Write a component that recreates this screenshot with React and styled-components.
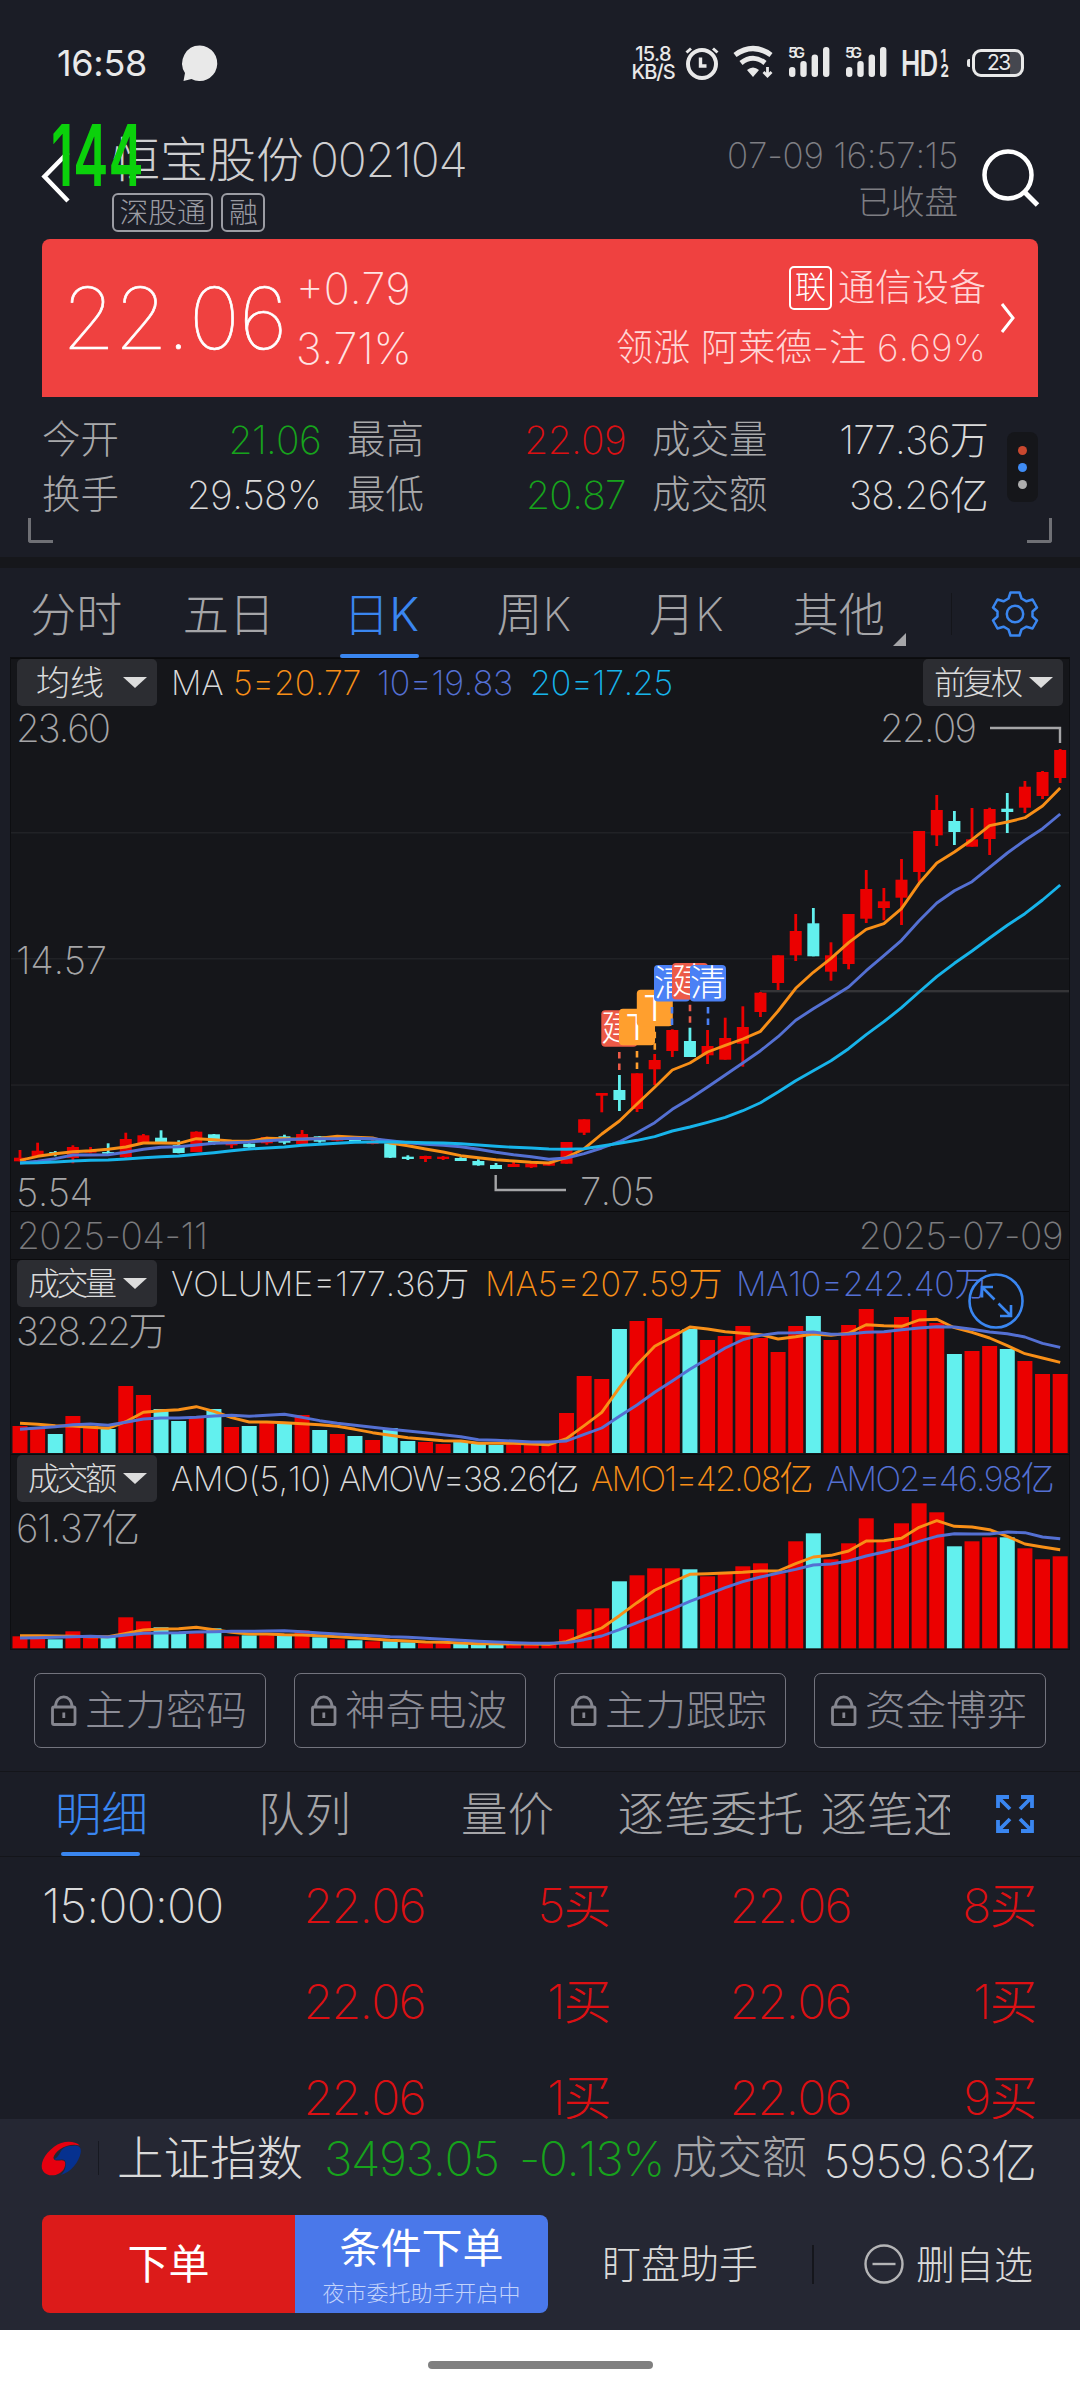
import React from 'react';
import styled, { createGlobalStyle } from 'styled-components';

const colors = {
    bg: '#1b1d26',
    panel: '#15161a',
    bar: '#252733',
    up: '#eb0000',
    down: '#62f0ee',
    red: '#dc1013',
    green: '#17a31c',
    blue: '#3a86f0',
    ma5: '#f88f17',
    ma10: '#5470d3',
    ma20: '#17b4ea',
    text: '#dadada',
    label: '#a5a5a8',
};

const STEP = 17.63;
const FIRST_X = 20;
const fallingDays = [2, 5, 8, 9, 11, 13, 15, 17, 19, 21, 22, 25, 26, 27, 34, 38, 45, 53, 56];

// high, body top, body bottom, low
const candles = [
    [1150, 1157.7, 1161.3, 1161.3], [1142.7, 1150.7, 1156.3, 1157], [1151, 1152, 1153.3, 1156.3],
    [1145.3, 1147, 1158, 1163.3], [1147, 1150, 1152.7, 1153.3], [1143.3, 1152, 1153.7, 1154.3],
    [1132.7, 1139, 1157.3, 1158.3], [1134, 1135.3, 1143.3, 1144], [1130.3, 1137.7, 1143.3, 1144],
    [1140.3, 1145, 1153, 1153.3], [1131.3, 1131.7, 1152, 1152], [1134, 1134.3, 1142.7, 1144.7],
    [1143.3, 1143.7, 1145.3, 1148], [1143.3, 1143.7, 1147.3, 1147.7], [1136.7, 1137, 1143.3, 1144.7],
    [1134.7, 1136.3, 1142.7, 1144.3], [1130, 1134, 1144, 1144.3], [1136, 1136.3, 1141.7, 1142.7],
    [1136.7, 1138, 1140.7, 1141.3], [1138.3, 1139, 1142, 1142.3], [1138.3, 1142.3, 1144, 1144.3],
    [1142.7, 1143.3, 1157.7, 1158], [1155.3, 1156.7, 1159, 1160], [1155.7, 1156, 1159, 1162],
    [1156, 1156.7, 1159, 1160], [1157.3, 1158, 1161, 1161], [1159.3, 1161, 1165.3, 1165.7],
    [1163, 1165, 1169, 1169], [1162, 1164, 1167, 1167], [1162.3, 1163.7, 1167.3, 1168],
    [1161.7, 1163, 1165.7, 1165.7], [1142, 1142, 1163.7, 1163.7], [1119.3, 1119.3, 1132.7, 1135],
    [1093, 1093, 1095.7, 1112.3], [1075, 1090, 1100, 1111], [1073.3, 1073.3, 1109, 1112],
    [1054, 1060, 1069.3, 1085], [1029.3, 1030, 1051, 1057], [1027.7, 1041, 1057, 1057],
    [1030, 1046, 1055.3, 1064], [1017.7, 1038, 1059.7, 1059.7], [1006.3, 1027, 1043.7, 1066.7],
    [992, 992.7, 1012, 1017], [955.3, 955.3, 983, 990], [914, 931, 955.3, 961],
    [908, 923.3, 956.3, 956.3], [942.3, 955.3, 971.7, 980.7], [914, 914, 964, 969.3],
    [870, 889, 918.7, 923], [888, 901.3, 908, 920.3], [859, 879.7, 897.7, 925],
    [831, 831, 872, 881.7], [795, 810, 835.3, 846], [811, 821, 832, 845],
    [808, 839.3, 846.7, 846.7], [807.7, 809, 839, 855], [793, 808.7, 812, 833],
    [781, 786.7, 807.7, 813], [771, 772, 796, 799], [749, 750, 778, 783],
];

const priceLines = {
    ma20: [
        1163, 1162.7, 1162, 1161, 1160.3, 1160, 1159, 1157.7, 1156.7, 1156, 1154.3, 1152.7, 1150.7, 1149, 1148,
        1147, 1145.3, 1144.3, 1143.3, 1142.3, 1142, 1142, 1142.3, 1142.7, 1143, 1143.7, 1145, 1146.3, 1147.3, 1148,
        1149, 1149.3, 1148.7, 1146, 1143.3, 1140.3, 1136.7, 1131, 1127, 1122.3, 1117.3, 1110.7, 1102.7, 1092, 1080.7,
        1070.7, 1060.7, 1048.7, 1034.7, 1021.7, 1007.7, 992, 976.7, 963.3, 951, 938, 925.3, 913.7, 900, 885,
    ],
    ma10: [
        1163, 1161.3, 1158.7, 1155, 1155, 1154.7, 1152.3, 1149.3, 1147.3, 1146.7, 1145, 1143.3, 1142.7, 1142, 1140.7,
        1139.7, 1139, 1138.7, 1138.7, 1138.3, 1138.7, 1140.7, 1142.7, 1144.3, 1145.3, 1146.7, 1149.3, 1152.3, 1154.7, 1156.7,
        1159.3, 1158, 1153.7, 1148, 1141.7, 1132.7, 1122.7, 1109.3, 1098.7, 1087, 1075, 1063, 1050.7, 1036.7, 1020.3,
        1008.7, 998, 987, 970.7, 955.7, 940.3, 920.7, 903, 890.7, 881.7, 867.3, 853, 840.3, 828.7, 814,
    ],
    ma5: [
        1160.3, 1156.3, 1153.7, 1151.7, 1150.7, 1149.3, 1147, 1143, 1143, 1143.3, 1138.7, 1139.7, 1141, 1141.3, 1138.3,
        1138.7, 1139.3, 1138.3, 1136.3, 1137.3, 1138, 1143, 1145.7, 1149, 1152, 1155.7, 1157.7, 1159.7, 1161, 1162.3,
        1163, 1157.3, 1148.7, 1134, 1121, 1104, 1087.3, 1070, 1063, 1052, 1045.3, 1039, 1031.3, 1011, 988.3,
        972.3, 958.3, 942.7, 929.3, 923.7, 908.7, 883.3, 863, 852, 839.7, 825.7, 822, 817.7, 806, 788,
    ],
};

const volume = {
    base: 1453,
    bars: [
        27, 26, 19, 37, 27, 24, 67, 58, 44, 32, 35, 44, 26, 27, 30, 29, 38, 23, 19, 17,
        13, 25, 12, 11, 9, 12, 9, 8, 9, 9, 9, 40, 77, 74, 124, 132, 135, 124, 124, 113,
        117, 127, 115, 101, 127, 137, 113, 128, 144, 121, 136, 143, 130, 99, 102, 107, 104, 92, 79, 79,
    ],
    ma5: [
        1423.3, 1424.3, 1425.7, 1426, 1427.3, 1428.3, 1421.7, 1412.3, 1410.7, 1409.7, 1406.7, 1411.3, 1417.7, 1422, 1422,
        1422.7, 1423.7, 1424.7, 1426.3, 1429.3, 1432.7, 1435.3, 1437.7, 1439.3, 1440.7, 1441, 1443.3, 1443.3, 1443.3, 1444,
        1444.7, 1438.7, 1425.7, 1412.3, 1387.7, 1364.7, 1346.3, 1336.7, 1327, 1329, 1331.7, 1333.3, 1334.7, 1339, 1336.7,
        1334, 1335.3, 1333.3, 1324.7, 1325.7, 1326.3, 1320, 1319.3, 1327.7, 1332.3, 1338, 1345.7, 1353.7, 1358, 1362.3,
    ],
    ma10: [
        1429.3, 1428, 1426.7, 1424.7, 1424, 1425.3, 1422.3, 1419, 1418, 1418, 1417.3, 1416, 1415.3, 1416.3, 1415.3,
        1414.3, 1417.3, 1420.7, 1423.3, 1425.3, 1427.3, 1429.3, 1431, 1432.7, 1434.7, 1436.7, 1439.7, 1440.3, 1441, 1442,
        1442, 1441, 1434.3, 1428, 1416.3, 1405, 1392.3, 1381, 1369.3, 1358.7, 1348, 1339.7, 1335.3, 1333, 1332.7,
        1332, 1334.3, 1334, 1332.3, 1331.7, 1329.7, 1328, 1326.7, 1327, 1329.3, 1332, 1333.7, 1337, 1343.3, 1347.3,
    ],
};

const amount = {
    base: 1648.3,
    bars: [
        12, 10, 9, 17, 11, 11, 31, 27, 21, 15, 15, 20, 12, 13, 13, 13, 18, 11, 9, 8,
        7, 7, 6, 5, 5, 6, 5, 5, 4, 4, 4, 19, 39, 40, 67, 73, 80, 80, 79, 72,
        75, 82, 85, 75, 107, 115, 89, 105, 130, 107, 125, 145, 136, 102, 107, 111, 111, 100, 89, 92,
    ],
    ma5: [
        1635.7, 1635.7, 1636, 1636.3, 1636.7, 1636.7, 1633.3, 1630, 1629, 1628.7, 1627.3, 1629.7, 1632.3, 1634, 1634,
        1634.7, 1635, 1635.7, 1636.7, 1637.7, 1639, 1640.3, 1641, 1642, 1642.3, 1643, 1643.7, 1643.7, 1644, 1644,
        1644.3, 1641.7, 1634.7, 1628, 1615.7, 1602.7, 1590.3, 1582, 1574.3, 1573.7, 1573, 1572.3, 1571, 1571, 1563.7,
        1557, 1555.3, 1551, 1541, 1540.7, 1538.3, 1527.3, 1520.7, 1526.3, 1527, 1529.7, 1536.3, 1544, 1547, 1549.7,
    ],
    ma10: [
        1638, 1637.7, 1637.3, 1636.7, 1636.3, 1637, 1635, 1633.3, 1633, 1632.7, 1632, 1631.7, 1631.3, 1631.3, 1631,
        1630.7, 1631.7, 1633, 1634, 1635, 1635.7, 1636.7, 1637.3, 1638.3, 1639.3, 1640.3, 1641.3, 1642, 1642.7, 1643.3,
        1643.3, 1642.7, 1639.7, 1636, 1629.7, 1622.7, 1615.7, 1609, 1601.3, 1594.7, 1587.7, 1581.7, 1577, 1573, 1569.3,
        1565, 1564, 1561, 1556, 1552, 1547.3, 1541.3, 1536.3, 1533.7, 1534, 1534, 1532, 1532.7, 1537, 1538.7,
    ],
};

const marks = [
    { x: 601.3, y: 1010.3, label: '建', color: '#ec5a48', lead: 1052 },
    { x: 619, y: 1008.7, label: 'T', color: '#ff9f2e', lead: 1051 },
    { x: 636.8, y: 989.7, label: 'T', color: '#ff9f2e', lead: 1031.7 },
    { x: 654, y: 965, label: '清', color: '#4a80f5', lead: 1007 },
    { x: 672, y: 963, label: '建', color: '#ec5a48', lead: 1004.7 },
    { x: 690, y: 965, label: '清', color: '#4a80f5', lead: 1007 },
];

const stats = [
    ['今开', '21.06', colors.green], ['最高', '22.09', colors.red], ['成交量', '177.36万', colors.text],
    ['换手', '29.58%', colors.text], ['最低', '20.87', colors.green], ['成交额', '38.26亿', colors.text],
];

const periods = ['分时', '五日', '日K', '周K', '月K', '其他'];
const signals = ['主力密码', '神奇电波', '主力跟踪', '资金博弈'];
const detailTabs = ['明细', '队列', '量价', '逐笔委托', '逐笔还原'];
const ticks = [
    ['15:00:00', '22.06', '5买', '22.06', '8买'],
    ['', '22.06', '1买', '22.06', '1买'],
    ['', '22.06', '1买', '22.06', '9买'],
];

const xOf = i => FIRST_X + i * STEP;
const dayColor = i => (fallingDays.includes(i) ? colors.down : colors.up);

const Line = ({ values, color }) => (
    <polyline
        points={values.map((y, i) => `${xOf(i).toFixed(1)},${y}`).join(' ')}
        fill="none"
        stroke={color}
        strokeWidth="2.9"
        strokeLinejoin="round"
    />
);

const PriceChart = () => (
    <Plot height="504" viewBox="11 707 1058 504">
        {[832.7, 958.7, 1085].map(y => (
            <rect key={y} x="11" y={y - 0.7} width="1058" height="1.5" fill="#212226" />
        ))}
        <rect x="760" y="990" width="309" height="2.4" fill="#343437" />
        {candles.map(([high, top, bottom, low], i) => (
            <g key={xOf(i)} fill={dayColor(i)}>
                <rect x={xOf(i) - 1.4} y={high} width="2.8" height={low - high} />
                <rect x={xOf(i) - 6} y={top} width="12" height={bottom - top} />
            </g>
        ))}
        <Line values={priceLines.ma5} color={colors.ma5} />
        <Line values={priceLines.ma10} color={colors.ma10} />
        <Line values={priceLines.ma20} color={colors.ma20} />
        {marks.map(({ x, y, label, color, lead }) => (
            <g key={x}>
                <path d={`M${x + 18} ${lead}v18`} stroke={color} strokeWidth="2.6" strokeDasharray="6.5 5" />
                <rect x={x} y={y} width="36" height="36.5" rx="4" fill={color} />
                <MarkLabel x={x + 18} y={y + 31}>{label}</MarkLabel>
            </g>
        ))}
        <path d="M990 728H1060V743M495.7 1175V1190H566" fill="none" stroke="#a5a5a7" strokeWidth="2.4" />
        <AxisLabel x="16" y="741.5" textLength="95">23.60</AxisLabel>
        <AxisLabel x="16" y="974" textLength="91">14.57</AxisLabel>
        <AxisLabel x="16" y="1205.5" textLength="77">5.54</AxisLabel>
        <AxisLabel x="880" y="742" textLength="97">22.09</AxisLabel>
        <AxisLabel x="580" y="1205" textLength="75">7.05</AxisLabel>
    </Plot>
);

const BarChart = ({ top, data, scale, scaleY, scaleWidth }) => (
    <Plot height="146" viewBox={`11 ${top} 1058 146`}>
        {data.bars.map((h, i) => (
            <rect key={xOf(i)} x={xOf(i) - 7.5} y={data.base - h} width="15" height={h} fill={dayColor(i)} />
        ))}
        <Line values={data.ma5} color={colors.ma5} />
        <Line values={data.ma10} color={colors.ma10} />
        <AxisLabel x="16" y={scaleY} textLength={scaleWidth}>{scale}</AxisLabel>
    </Plot>
);

const SignalBars = () => (
    <svg width="42" height="32" viewBox="0 0 42 32" fill="#e9e9e9">
        <SmallSvgText x="0" y="11" textLength="17">5G</SmallSvgText>
        <rect x="1" y="20" width="6.4" height="10" rx="3" />
        <rect x="12.3" y="14" width="6.4" height="16" rx="3" />
        <rect x="23.6" y="7.5" width="6.4" height="22.5" rx="3" />
        <rect x="35" y="0" width="6.4" height="30" rx="3" />
    </svg>
);

const StatusIcons = () => (
    <StatusRight>
        <NetSpeed>
            <span>15.8</span>
            <span>KB/S</span>
        </NetSpeed>
        <svg width="34" height="34" viewBox="0 0 34 34" fill="none" stroke="#e9e9e9">
            <circle cx="17" cy="18" r="14" strokeWidth="4" />
            <path d="M15.5 11.5V20h6" strokeWidth="3.4" />
            <path d="M1.5 6.5 6 2.5M32.5 6.5 28 2.5" strokeWidth="3" />
        </svg>
        <WifiIcon width="41" height="34" viewBox="0 0 41 34" fill="none" stroke="#e9e9e9">
            <path d="M2 9Q20 -4 38 9" strokeWidth="5.2" />
            <path d="M8 17Q20 7.5 32 17" strokeWidth="5" />
            <path d="M14 24Q20 19 26 24L20 31Z" fill="#e9e9e9" stroke="none" />
            <path d="M34.5 21V30M30.5 26 34.5 30 38.5 26" strokeWidth="2.8" />
        </WifiIcon>
        <SignalBars />
        <SignalBars />
        <HdMark>
            HD
            <HdIndex>
                <span>1</span>
                <span>2</span>
            </HdIndex>
        </HdMark>
        <Battery>
            <BatteryCap />
            <BatteryBody>23</BatteryBody>
        </Battery>
    </StatusRight>
);

const LockIcon = () => (
    <svg width="26" height="31" viewBox="0 0 26 31" fill="none" stroke="#85868f" strokeWidth="2.8">
        <rect x="1.5" y="12" width="22.5" height="17.5" rx="1.5" fill="#17181d" />
        <path d="M4.5 12C4.5 -1.5 21 -1.5 21 12M12.8 17.5V23" />
    </svg>
);

const GearIcon = () => (
    <svg width="46" height="46" viewBox="0 0 46 46" fill="none" stroke={colors.blue} strokeWidth="2.5" strokeLinejoin="round">
        <path d="M18.5 1.5H27.5L29.5 7.5 34.5 10.3 40.5 8.5 45 16.5 40.5 20.5V25.5L45 29.5 40.5 37.5 34.5 35.7 29.5 38.5 27.5 44.5H18.5L16.5 38.5 11.5 35.7 5.5 37.5 1 29.5 5.5 25.5V20.5L1 16.5 5.5 8.5 11.5 10.3 16.5 7.5Z" />
        <circle cx="23" cy="23" r="8.2" />
    </svg>
);

const ExpandIcon = () => (
    <svg width="38" height="38" viewBox="0 0 38 38" fill="none" stroke={colors.blue} strokeWidth="3.8">
        <path d="M2 13V2H13M2 2 14 14M25 2H36V13M36 2 24 14M2 25V36H13M2 36 14 24M25 36H36V25M36 36 24 24" />
    </svg>
);

const App = () => (
    <Screen>
        <GlobalStyle />
        <StatusBar>
            <Clock>16:58</Clock>
            <svg width="36" height="37" viewBox="0 0 36 37" fill="#e9e9e9">
                <path d="M18 .5A17.5 17.8 0 1 1 9.5 34L1.5 36 3 28A17.5 17.8 0 0 1 18 .5Z" />
            </svg>
            <StatusIcons />
        </StatusBar>

        <Header>
            <BackIcon width="30" height="54" viewBox="0 0 30 54" fill="none" stroke="#fff" strokeWidth="4.5">
                <path d="M27 2.5 3.5 26.5 27 51" />
            </BackIcon>
            <FrameCounter>144</FrameCounter>
            <TitleBlock>
                <Title>
                    恒宝股份
                    <Code>002104</Code>
                </Title>
                <Tags>
                    <Tag>深股通</Tag>
                    <Tag>融</Tag>
                </Tags>
            </TitleBlock>
            <TimeBlock>
                <Timestamp>07-09 16:57:15</Timestamp>
                <span>已收盘</span>
            </TimeBlock>
            <SearchIcon width="58" height="60" viewBox="0 0 58 60" fill="none" stroke="#fff" strokeWidth="4.5">
                <circle cx="26" cy="26" r="23.5" />
                <path d="M42.5 43 55.5 56" strokeWidth="5" />
            </SearchIcon>
        </Header>

        <QuoteCard>
            <Price>22.06</Price>
            <Change>
                <span>+0.79</span>
                <span>3.71%</span>
            </Change>
            <Sector>
                <SectorName>
                    <LinkBadge>联</LinkBadge>
                    通信设备
                </SectorName>
                <SectorLeader>领涨 阿莱德-注 6.69%</SectorLeader>
            </Sector>
            <svg width="16" height="32" viewBox="0 0 16 32" fill="none" stroke="#fff" strokeWidth="3">
                <path d="M2 2 13 16 2 30" />
            </svg>
        </QuoteCard>

        <StatsPanel>
            <StatsRow>
                <StatsGrid>
                    {stats.map(([label, value, color]) => (
                        <Stat key={label}>
                            {label}
                            <StatValue color={color}>{value}</StatValue>
                        </Stat>
                    ))}
                </StatsGrid>
                <MoreDots>
                    <Dot color="#c9482f" />
                    <Dot color="#3f8cf5" />
                    <Dot color="#adadad" />
                </MoreDots>
            </StatsRow>
            <Corners>
                <Corner side="left" />
                <Corner side="right" />
            </Corners>
        </StatsPanel>

        <PeriodTabs>
            {periods.map(name => (
                <PeriodTab key={name} active={name === '日K'}>
                    {name}
                    {name === '其他' && <MoreTriangle />}
                </PeriodTab>
            ))}
            <GearSlot>
                <GearIcon />
            </GearSlot>
        </PeriodTabs>

        <ChartPanel>
            <Legend>
                <Picker>
                    <PickerText>均线</PickerText>
                    <Caret />
                </Picker>
                <LegendItem color={colors.text} width="50">MA</LegendItem>
                <LegendItem color={colors.ma5} gap="12" width="127">5=20.77</LegendItem>
                <LegendItem color={colors.ma10} gap="17" width="138">10=19.83</LegendItem>
                <LegendItem color={colors.ma20} gap="15">20=17.25</LegendItem>
                <AdjustPicker>
                    <PickerText narrow>前复权</PickerText>
                    <Caret />
                </AdjustPicker>
            </Legend>
            <PriceChart />
            <DateRow>
                <span>2025-04-11</span>
                <span>2025-07-09</span>
            </DateRow>
            <Legend>
                <Picker>
                    <PickerText narrow>成交量</PickerText>
                    <Caret />
                </Picker>
                <LegendItem color={colors.text} width="297" spacing="0">VOLUME=177.36万</LegendItem>
                <LegendItem color={colors.ma5} gap="17" width="234" spacing="0">MA5=207.59万</LegendItem>
                <LegendItem color={colors.ma10} gap="17">MA10=242.40万</LegendItem>
                <ZoomToggle width="56" height="56" viewBox="0 0 56 56" fill="none" stroke={colors.blue} strokeWidth="2.6">
                    <circle cx="28" cy="28" r="26.5" />
                    <path d="M14 24.5V14H25M14 14 26.5 26.5M43 32V43H32M43 43 30.5 30.5" />
                </ZoomToggle>
            </Legend>
            <BarChart top={1308} data={volume} scale="328.22万" scaleY={1345} scaleWidth={151} />
            <Legend>
                <Picker>
                    <PickerText narrow>成交额</PickerText>
                    <Caret />
                </Picker>
                <LegendItem color={colors.text} width="153">AMO(5,10)</LegendItem>
                <LegendItem color={colors.text} gap="15" width="237" spacing="-1.7">AMOW=38.26亿</LegendItem>
                <LegendItem color={colors.ma5} gap="15" width="220" spacing="-1.7">AMO1=42.08亿</LegendItem>
                <LegendItem color={colors.ma10} gap="15" spacing="-1.7">AMO2=46.98亿</LegendItem>
            </Legend>
            <BarChart top={1503} data={amount} scale="61.37亿" scaleY={1542} scaleWidth={124} />
        </ChartPanel>

        <SignalRow>
            {signals.map(name => (
                <SignalButton key={name}>
                    <LockIcon />
                    {name}
                </SignalButton>
            ))}
        </SignalRow>

        <DetailBar>
            <DetailScroller>
                {detailTabs.map((name, i) => (
                    <DetailTab key={name} active={i === 0}>{name}</DetailTab>
                ))}
            </DetailScroller>
            <ExpandSlot>
                <ExpandIcon />
            </ExpandSlot>
        </DetailBar>

        <TickList>
            {ticks.map(([time, ...cells]) => (
                <TickRow key={cells.join()}>
                    <TickTime>{time}</TickTime>
                    {cells.map((cell, i) => <TickCell key={`${i}-${cell}`}>{cell}</TickCell>)}
                </TickRow>
            ))}
        </TickList>

        <BottomBar>
            <IndexRow>
                <svg width="39" height="35" viewBox="24 49 116 104">
                    <path d="M136 62C122 48 85 46 60 66C30 88 16 120 27 138C40 158 78 155 90 130C96 116 94 106 82 106C70 108 58 108 58 98C62 78 100 52 136 62Z" fill="#e6000f" />
                    <path d="M112 64C130 58 143 66 139 85C134 110 112 142 80 150C94 140 98 118 92 107C85 100 70 108 60 103C76 98 76 78 90 69C98 65 105 64 112 64Z" fill="#06318f" />
                </svg>
                <IndexDivider />
                <IndexName>上证指数</IndexName>
                <IndexValue>3493.05</IndexValue>
                <IndexChange>-0.13%</IndexChange>
                <IndexLabel>成交额</IndexLabel>
                <IndexTurnover>5959.63亿</IndexTurnover>
            </IndexRow>
            <ActionRow>
                <OrderButton>下单</OrderButton>
                <ConditionButton>
                    条件下单
                    <ConditionNote>夜市委托助手开启中</ConditionNote>
                </ConditionButton>
                <Assistant>盯盘助手</Assistant>
                <RemoveButton>
                    <svg width="40" height="40" viewBox="0 0 40 40" fill="none" stroke="#b4b4b6" strokeWidth="2.4">
                        <circle cx="20" cy="20" r="18.5" />
                        <path d="M8.5 20H31.5" />
                    </svg>
                    删自选
                </RemoveButton>
            </ActionRow>
        </BottomBar>

        <GestureArea>
            <GesturePill />
        </GestureArea>
    </Screen>
);

export default App;

const GlobalStyle = createGlobalStyle`
    * {
        box-sizing: border-box;
    }

    body {
        margin: 0;
        background: ${colors.bg};
        font-family: Inter, "Noto Sans CJK SC", sans-serif;
        font-weight: 200;
        font-kerning: none;
        white-space: nowrap;
    }

    svg {
        display: block;
        flex-shrink: 0;
        overflow: visible;
    }
`;

const Screen = styled.div`
    width: 1080px;
    height: 2400px;
    overflow: hidden;
    background: ${colors.bg};
`;

const StatusBar = styled.div`
    display: flex;
    align-items: center;
    height: 110px;
    padding: 16px 56px 0 57px;
    color: #e9e9e9;
`;

const Clock = styled.div`
    width: 125px;
    font-size: 36px;
    font-weight: 400;
    letter-spacing: -0.3px;
`;

const StatusRight = styled.div`
    display: flex;
    align-items: center;
    margin-left: auto;
    height: 34px;
`;

const NetSpeed = styled.div`
    display: flex;
    flex-direction: column;
    align-items: center;
    width: 42px;
    margin-right: 11px;
    font-size: 20px;
    font-weight: 500;
    line-height: 18px;
    letter-spacing: -1px;
`;

const WifiIcon = styled.svg`
    margin: 0 14px 0 14px;

    & + svg {
        margin-right: 15px;
    }
`;

const SmallSvgText = styled.text`
    font-size: 15px;
    font-weight: 600;
`;

const HdMark = styled.div`
    display: flex;
    align-items: center;
    width: 48px;
    margin-left: 14px;
    font-size: 35px;
    font-weight: 600;
    line-height: 34px;
    letter-spacing: -1px;
    transform: scaleX(0.74);
    transform-origin: left;
`;

const HdIndex = styled.div`
    display: flex;
    flex-direction: column;
    margin-left: 4px;
    font-size: 18px;
    font-weight: 700;
    line-height: 15px;
`;

const Battery = styled.div`
    display: flex;
    align-items: center;
    margin-left: 18px;
`;

const BatteryCap = styled.div`
    width: 3px;
    height: 8px;
    margin-right: 2px;
    border-radius: 2px 0 0 2px;
    background: #e9e9e9;
`;

const BatteryBody = styled.div`
    width: 52px;
    height: 28px;
    padding-left: 12px;
    border: 3px solid #e9e9e9;
    border-radius: 9px;
    background: linear-gradient(90deg, transparent 75%, #45474f 75%);
    font-size: 21px;
    font-weight: 400;
    line-height: 22px;
    letter-spacing: -1.5px;
`;

const Header = styled.div`
    position: relative;
    display: flex;
    align-items: flex-start;
    height: 129px;
    padding: 20px 40px 0 41px;
`;

const BackIcon = styled.svg`
    margin-top: 20px;
`;

// frame rate overlay drawn over the title
const FrameCounter = styled.div`
    position: absolute;
    top: 15px;
    left: 51px;
    color: #0bd10b;
    font-size: 85px;
    font-weight: 600;
    line-height: 62px;
    transform: scaleX(0.62);
    transform-origin: left;
`;

const TitleBlock = styled.div`
    margin-left: 41px;
`;

const Title = styled.div`
    color: #cfcfd1;
    font-size: 48px;
    line-height: 60px;
`;

const Code = styled.span`
    margin-left: 6px;
    letter-spacing: -1.3px;
`;

const Tags = styled.div`
    display: flex;
    gap: 8px;
    margin-top: 3px;
`;

const Tag = styled.div`
    height: 39px;
    padding: 0 5.5px;
    border: 2px solid #9b9ca3;
    border-radius: 6px;
    color: #9b9ca3;
    font-size: 28.8px;
    line-height: 36px;
`;

const TimeBlock = styled.div`
    display: flex;
    flex-direction: column;
    align-items: flex-end;
    margin: 2px 24px 0 auto;
    color: #7e7e83;
    font-size: 33.5px;
    line-height: 47px;
`;

const Timestamp = styled.span`
    font-size: 35px;
    letter-spacing: -0.2px;
`;

const SearchIcon = styled.svg`
    margin-top: 19px;
`;

const QuoteCard = styled.div`
    display: flex;
    align-items: center;
    height: 158px;
    margin: 0 42px;
    padding: 0 22px 0 20px;
    border-radius: 8px 8px 0 0;
    background: #ef4140;
    color: #fff;
`;

const Price = styled.div`
    width: 234px;
    font-size: 86px;
    font-weight: 100;
    letter-spacing: -1px;
    -webkit-text-stroke: 0.7px #fff;
`;

const Change = styled.div`
    display: flex;
    flex-direction: column;
    font-size: 43px;
    line-height: 60px;
    color: #ffe4e4;
`;

const Sector = styled.div`
    display: flex;
    flex-direction: column;
    align-items: flex-end;
    margin: 0 14px 0 auto;
    color: #ffd6d6;
    font-size: 37px;
    line-height: 60px;
`;

const SectorName = styled.div`
    display: flex;
    align-items: center;
    height: 60px;
`;

const LinkBadge = styled.div`
    width: 43px;
    height: 44px;
    margin-right: 6px;
    border: 2.5px solid #fff;
    border-radius: 5px;
    color: #fff;
    font-size: 31px;
    line-height: 38px;
    text-align: center;
`;

const SectorLeader = styled.div`
    font-size: 37px;
    letter-spacing: 0.2px;
`;

const StatsPanel = styled.div`
    height: 171px;
    padding-top: 15px;
    border-bottom: 11px solid #16171b;
`;

const StatsRow = styled.div`
    display: flex;
    align-items: center;
    justify-content: space-between;
    padding: 0 42px;
`;

const StatsGrid = styled.div`
    display: grid;
    grid-template-columns: 279px 279px 336px;
    column-gap: 26px;
`;

const Stat = styled.div`
    display: flex;
    justify-content: space-between;
    color: #a9a9ab;
    font-size: 38.5px;
    line-height: 55px;
`;

const StatValue = styled.span`
    color: ${props => props.color};
    font-size: 39px;
    letter-spacing: -0.7px;
`;

const MoreDots = styled.div`
    display: flex;
    flex-direction: column;
    align-items: center;
    justify-content: center;
    gap: 8px;
    width: 31px;
    height: 70px;
    border-radius: 8px;
    background: #15161a;
`;

const Dot = styled.div`
    width: 9px;
    height: 9px;
    border-radius: 50%;
    background: ${props => props.color};
`;

const Corners = styled.div`
    display: flex;
    justify-content: space-between;
    margin-top: -4px;
    padding: 0 28px;
`;

const Corner = styled.div`
    width: 25px;
    height: 25px;
    border-bottom: 3px solid #6f7075;
    border-${props => props.side}: 3px solid #6f7075;
    border-bottom-${props => props.side}-radius: 3px;
`;

const PeriodTabs = styled.div`
    display: flex;
    height: 90px;
`;

const PeriodTab = styled.div`
    position: relative;
    width: 152.5px;
    height: 90px;
    color: ${props => (props.active ? colors.blue : colors.label)};
    font-size: 46px;
    font-weight: ${props => (props.active ? 300 : 200)};
    line-height: 92px;
    text-align: center;

    &::after {
        content: '';
        display: ${props => (props.active ? 'block' : 'none')};
        position: absolute;
        bottom: 0;
        left: 35px;
        width: 79px;
        height: 4px;
        border-radius: 2px;
        background: ${colors.blue};
    }
`;

const MoreTriangle = styled.div`
    position: absolute;
    right: 9px;
    bottom: 12px;
    border-bottom: 13px solid ${colors.label};
    border-left: 13px solid transparent;
`;

const GearSlot = styled.div`
    display: flex;
    align-items: center;
    height: 42px;
    margin: 25px 0 0 36px;
    padding-left: 40px;
    border-left: 1px solid #14151a;
`;

const ChartPanel = styled.div`
    margin: 0 11px;
    background: ${colors.panel};
    box-shadow: 0 0 0 1px #0d0e11;
`;

const Plot = styled.svg`
    width: 1058px;
    height: ${props => props.height}px;
`;

const AxisLabel = styled.text`
    fill: #a5a5a7;
    font-size: 38.5px;
`;

const MarkLabel = styled.text`
    fill: #fff;
    font-size: 36px;
    font-weight: 300;
    text-anchor: middle;
`;

const Legend = styled.div`
    position: relative;
    display: flex;
    align-items: flex-start;
    height: 49px;
    padding: 0 6px;
    border-top: 1px solid #0b0b0d;
`;

const Picker = styled.div`
    display: flex;
    flex-shrink: 0;
    align-items: center;
    justify-content: space-between;
    width: 140px;
    height: 47px;
    margin-right: 14px;
    padding: 0 10px 0 11px;
    border-radius: 5px;
    background: #2c2d32;
    color: ${colors.text};
    font-weight: 300;
`;

const PickerText = styled.span`
    width: 86px;
    margin-right: auto;
    font-size: ${props => (props.narrow ? 32 : 34)}px;
    letter-spacing: ${props => (props.narrow ? -3.5 : 0)}px;
    text-indent: ${props => (props.narrow ? 0 : 8)}px;
    line-height: 46px;
`;

const AdjustPicker = styled(Picker)`
    margin: 0 0 0 auto;
`;

const Caret = styled.div`
    border-top: 11px solid #dcdcdc;
    border-left: 12px solid transparent;
    border-right: 12px solid transparent;
`;

const LegendItem = styled.div`
    flex-shrink: 0;
    width: ${props => (props.width ? `${props.width}px` : 'auto')};
    margin-left: ${props => props.gap || 0}px;
    color: ${props => props.color};
    font-size: 34px;
    line-height: 47px;
    letter-spacing: ${props => props.spacing || -0.3}px;
`;

const DateRow = styled.div`
    display: flex;
    justify-content: space-between;
    height: 48px;
    padding: 0 6px;
    border-top: 1px solid #0b0b0d;
    color: #7a7a7d;
    font-size: 37px;
    line-height: 47px;
    letter-spacing: -0.5px;
`;

const ZoomToggle = styled.svg`
    position: absolute;
    top: 13px;
    left: 957px;
`;

const SignalRow = styled.div`
    display: flex;
    gap: 28px;
    height: 122px;
    padding: 24px 34px 0;
`;

const SignalButton = styled.div`
    display: flex;
    align-items: center;
    gap: 8px;
    width: 232px;
    height: 75px;
    padding-left: 16px;
    border: 1.5px solid #73747e;
    border-radius: 7px;
    color: #8b8c96;
    font-size: 40.5px;
    line-height: 70px;
`;

const DetailBar = styled.div`
    display: flex;
    height: 86px;
    border-top: 1px solid #14151a;
    border-bottom: 1px solid #14151a;
`;

const DetailScroller = styled.div`
    display: flex;
    width: 950px;
    overflow: hidden;
`;

const DetailTab = styled.div`
    position: relative;
    flex: 0 0 203px;
    color: ${props => (props.active ? colors.blue : colors.label)};
    font-size: 46.5px;
    font-weight: ${props => (props.active ? 300 : 200)};
    line-height: 84px;
    text-align: center;

    &::after {
        content: '';
        display: ${props => (props.active ? 'block' : 'none')};
        position: absolute;
        bottom: 0;
        left: 61px;
        width: 79px;
        height: 4px;
        border-radius: 2px;
        background: ${colors.blue};
    }
`;

const ExpandSlot = styled.div`
    display: flex;
    align-items: center;
    padding-left: 46px;
`;

const TickList = styled.div`
    height: 262px;
    overflow: hidden;
`;

const TickRow = styled.div`
    display: grid;
    grid-template-columns: 200px 182px 185px 241px 185px;
    height: 96px;
    padding-left: 43px;
    font-size: 48px;
    line-height: 97px;
    letter-spacing: -1.6px;
`;

const TickTime = styled.div`
    color: ${colors.text};
    text-indent: -1px;
    letter-spacing: -0.9px;
`;

const TickCell = styled.div`
    color: ${colors.red};
    text-align: right;
`;

const BottomBar = styled.div`
    height: 211px;
    background: ${colors.bar};
`;

const IndexRow = styled.div`
    display: flex;
    align-items: center;
    height: 78px;
    padding: 0 44px 0 42px;
    font-size: 48px;
`;

const IndexDivider = styled.div`
    width: 1px;
    height: 34px;
    margin: 0 18px 0 17px;
    background: #171921;
`;

const IndexName = styled.div`
    width: 207px;
    color: ${colors.text};
    font-size: 46.5px;
    line-height: 74px;
`;

const IndexValue = styled.div`
    width: 195px;
    color: ${colors.green};
    letter-spacing: -1.4px;
`;

const IndexChange = styled(IndexValue)`
    width: 153px;
`;

const IndexLabel = styled.div`
    color: ${colors.label};
    font-size: 45px;
    line-height: 74px;
`;

const IndexTurnover = styled.div`
    margin-left: auto;
    color: ${colors.text};
    font-size: 46px;
    letter-spacing: -0.9px;
`;

const ActionRow = styled.div`
    display: flex;
    align-items: center;
    height: 98px;
    margin-top: 18px;
    padding-left: 42px;
    color: ${colors.text};
    font-size: 39px;
    font-weight: 300;
`;

const OrderButton = styled.div`
    width: 253px;
    height: 98px;
    border-radius: 8px 0 0 8px;
    background: #dc1b1a;
    color: #fff;
    font-size: 41px;
    font-weight: 400;
    line-height: 98px;
    text-align: center;
`;

const ConditionButton = styled(OrderButton)`
    display: flex;
    flex-direction: column;
    align-items: center;
    padding-top: 10px;
    border-radius: 0 8px 8px 0;
    background: #4a78ea;
    line-height: 46px;
`;

const ConditionNote = styled.span`
    color: #c3d3fb;
    font-size: 22px;
    font-weight: 200;
    line-height: 44px;
`;

const Assistant = styled.div`
    width: 212px;
    height: 39px;
    margin-left: 54px;
    border-right: 2px solid #15161c;
    line-height: 37px;
`;

const RemoveButton = styled.div`
    display: flex;
    align-items: center;
    gap: 12px;
    margin-left: 50px;
    line-height: 37px;
`;

const GestureArea = styled.div`
    display: flex;
    justify-content: center;
    height: 70px;
    padding-top: 31px;
    background: #fff;
`;

const GesturePill = styled.div`
    width: 225px;
    height: 8px;
    border-radius: 4px;
    background: #808080;
`;
